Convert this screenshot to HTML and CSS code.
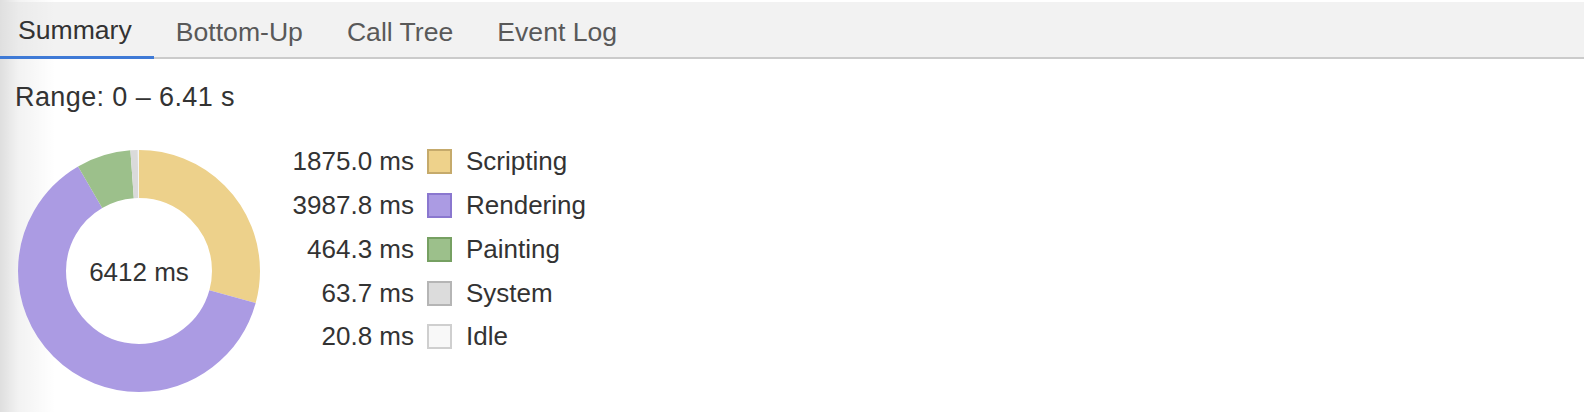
FILE: index.html
```html
<!DOCTYPE html>
<html>
<head>
<meta charset="utf-8">
<link rel="stylesheet" href="styles.css">
</head>
<body>
<div class="page">
  <div class="tabbar">
    <div class="tab active">Summary</div>
    <div class="tab">Bottom-Up</div>
    <div class="tab">Call Tree</div>
    <div class="tab">Event Log</div>
  </div>
  <div class="summary">
    <div class="range">Range: 0 – 6.41 s</div>
    <div class="chart">
      <div class="donut">
        <svg class="pie" width="242" height="242" viewBox="0 0 242 242">
          <g transform="rotate(-90 121 121)" fill="none" stroke-width="48">
            <circle cx="121" cy="121" r="97" stroke="#edd18b" stroke-dasharray="178.24 609.47" stroke-dashoffset="0"/>
            <circle cx="121" cy="121" r="97" stroke="#ab9be3" stroke-dasharray="379.07 609.47" stroke-dashoffset="-178.24"/>
            <circle cx="121" cy="121" r="97" stroke="#9cc08b" stroke-dasharray="44.14 609.47" stroke-dashoffset="-557.31"/>
            <circle cx="121" cy="121" r="97" stroke="#dadada" stroke-dasharray="6.06 609.47" stroke-dashoffset="-601.45"/>
            <circle cx="121" cy="121" r="97" stroke="#f6f6f6" stroke-dasharray="1.98 609.47" stroke-dashoffset="-607.50"/>
          </g>
        </svg>
        <div class="total">6412 ms</div>
      </div>
      <div class="legend">
        <div class="row"><span class="val">1875.0 ms</span><span class="sw scripting"></span><span class="lbl">Scripting</span></div>
        <div class="row"><span class="val">3987.8 ms</span><span class="sw rendering"></span><span class="lbl">Rendering</span></div>
        <div class="row"><span class="val">464.3 ms</span><span class="sw painting"></span><span class="lbl">Painting</span></div>
        <div class="row"><span class="val">63.7 ms</span><span class="sw system"></span><span class="lbl">System</span></div>
        <div class="row"><span class="val">20.8 ms</span><span class="sw idle"></span><span class="lbl">Idle</span></div>
      </div>
    </div>
  </div>
</div>
</body>
</html>
```

FILE: styles.css
```css
html, body {
  margin: 0;
  padding: 0;
  background: #fff;
}
body {
  font-family: "Liberation Sans", Arial, Helvetica, sans-serif;
  font-size: 26px;
  color: #333;
  width: 1584px;
  height: 412px;
  overflow: hidden;
}
.page {
  height: 412px;
  padding-top: 2px;
  box-sizing: border-box;
  background: linear-gradient(to right, rgba(0,0,0,0.13) 0px, rgba(0,0,0,0.05) 18px, rgba(0,0,0,0) 55px), #fff;
}
.tabbar {
  display: flex;
  height: 55px;
  background: linear-gradient(to right, rgba(0,0,0,0.08) 0px, rgba(0,0,0,0.03) 18px, rgba(0,0,0,0) 55px), #f2f2f2;
  border-bottom: 2px solid #cbcbcb;
}
.tab {
  display: flex;
  align-items: center;
  padding: 3px 22px 0;
  color: #595959;
  font-size: 26.6px;
  line-height: 1;
  box-sizing: border-box;
  height: 57px;
}
.tab:first-child {
  padding-left: 18px;
}
.tab.active {
  color: #333;
  border-bottom: 3px solid #3f7ad6;
  margin-bottom: -2px;
}
.summary {
  padding: 23px 0 0 15px;
}
.range {
  font-size: 27px;
  letter-spacing: 0.4px;
  line-height: 30px;
  color: #333;
}
.chart {
  display: flex;
  align-items: flex-start;
  margin-top: 28px;
}
.donut {
  display: grid;
  margin-top: 10px;
  margin-left: 3px;
  width: 242px;
  height: 242px;
}
.donut > * {
  grid-area: 1 / 1;
}
.total {
  align-self: center;
  justify-self: center;
  color: #333;
  line-height: 30px;
  padding-top: 2px;
}
.legend {
  display: flex;
  flex-direction: column;
  margin-left: 24px;
}
.row {
  display: flex;
  align-items: center;
  height: 43.75px;
}
.val {
  width: 130px;
  text-align: right;
  color: #333;
}
.sw {
  width: 25px;
  height: 25px;
  box-sizing: border-box;
  border: 2px solid;
  margin: 0 14px 0 13px;
}
.lbl {
  color: #333;
}
.scripting { background: #eed28b; border-color: #c5aa6b; }
.rendering { background: #ab9be3; border-color: #8a77cf; }
.painting { background: #9cc08b; border-color: #76a062; }
.system { background: #dcdcdc; border-color: #b5b5b5; }
.idle { background: #f8f8f8; border-color: #cfcfcf; }
```
